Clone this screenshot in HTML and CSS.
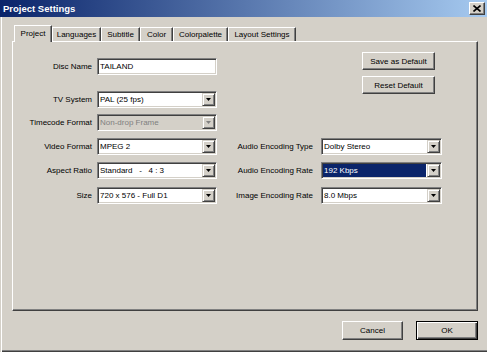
FILE: index.html
```html
<!DOCTYPE html>
<html>
<head>
<meta charset="utf-8">
<link rel="stylesheet" href="styles.css">
</head>
<body>
<div class="window">
  <div class="titlebar">
    <span class="title">Project Settings</span>
    <span class="close"><svg width="8" height="7" viewBox="0 0 8 7"><path d="M0.5 0.5 L7.5 6.5 M7.5 0.5 L0.5 6.5" stroke="#000" stroke-width="1.6" fill="none"/></svg></span>
  </div>
  <div class="tabs">
    <div class="tab tab-sel w-project">Project</div>
    <div class="tab w-lang">Languages</div>
    <div class="tab w-sub">Subtitle</div>
    <div class="tab w-color">Color</div>
    <div class="tab w-pal">Colorpalette</div>
    <div class="tab w-layout">Layout Settings</div>
  </div>
  <div class="panel">
    <div class="top">
      <div class="top-form">
        <div class="row row-disc">
          <span class="lbl">Disc Name</span>
          <div class="field input">TAILAND</div>
        </div>
        <div class="row row-tv">
          <span class="lbl">TV System</span>
          <div class="field select"><span class="val">PAL (25 fps)</span><span class="drop"><svg width="5" height="3" viewBox="0 0 5 3"><path d="M0 0H5L2.5 3Z" fill="#000"/></svg></span></div>
        </div>
        <div class="row row-tc">
          <span class="lbl">Timecode Format</span>
          <div class="field select disabled"><span class="val">Non-drop Frame</span><span class="drop"><svg width="5" height="3" viewBox="0 0 5 3"><path d="M0 0H5L2.5 3Z" fill="#808080"/></svg></span></div>
        </div>
      </div>
      <div class="side-buttons">
        <div class="btn btn-side btn-save">Save as Default</div>
        <div class="btn btn-side">Reset Default</div>
      </div>
    </div>
    <div class="row4 row-video">
      <span class="lbl">Video Format</span>
      <div class="field select"><span class="val">MPEG 2</span><span class="drop"><svg width="5" height="3" viewBox="0 0 5 3"><path d="M0 0H5L2.5 3Z" fill="#000"/></svg></span></div>
      <span class="lbl lbl-r">Audio Encoding Type</span>
      <div class="field select"><span class="val">Dolby Stereo</span><span class="drop"><svg width="5" height="3" viewBox="0 0 5 3"><path d="M0 0H5L2.5 3Z" fill="#000"/></svg></span></div>
    </div>
    <div class="row4 row-aspect">
      <span class="lbl">Aspect Ratio</span>
      <div class="field select"><span class="val pre">Standard   -   4 : 3</span><span class="drop"><svg width="5" height="3" viewBox="0 0 5 3"><path d="M0 0H5L2.5 3Z" fill="#000"/></svg></span></div>
      <span class="lbl lbl-r">Audio Encoding Rate</span>
      <div class="field select"><span class="val sel">192 Kbps</span><span class="drop"><svg width="5" height="3" viewBox="0 0 5 3"><path d="M0 0H5L2.5 3Z" fill="#000"/></svg></span></div>
    </div>
    <div class="row4 row-size">
      <span class="lbl">Size</span>
      <div class="field select"><span class="val">720 x 576 - Full D1</span><span class="drop"><svg width="5" height="3" viewBox="0 0 5 3"><path d="M0 0H5L2.5 3Z" fill="#000"/></svg></span></div>
      <span class="lbl lbl-r">Image Encoding Rate</span>
      <div class="field select"><span class="val">8.0 Mbps</span><span class="drop"><svg width="5" height="3" viewBox="0 0 5 3"><path d="M0 0H5L2.5 3Z" fill="#000"/></svg></span></div>
    </div>
  </div>
  <div class="footer">
    <div class="btn btn-cancel">Cancel</div>
    <div class="btn btn-ok">OK</div>
  </div>
</div>
</body>
</html>
```
FILE: styles.css
```css
html, body {
  margin: 0;
  padding: 0;
}
body {
  width: 487px;
  height: 352px;
  overflow: hidden;
  background: #D4D0C8;
  font-family: "Liberation Sans", Arial, sans-serif;
  font-size: 8px;
  color: #000;
}
.window {
  box-sizing: border-box;
  width: 487px;
  height: 352px;
  background: #D4D0C8;
  box-shadow: inset 1px 0 #D4D0C8, inset 2px 0 #ffffff, inset 0 -1px #404040, inset 0 -2px #808080;
}
.titlebar {
  height: 17px;
  display: flex;
  align-items: center;
  padding-left: 3px;
  background: linear-gradient(to right, #0A246A, #A6CAF0);
}
.title {
  color: #fff;
  font-weight: bold;
  font-size: 9.5px;
}
.close {
  margin-left: auto;
  margin-right: 2px;
  box-sizing: border-box;
  width: 16px;
  height: 13px;
  background: #D4D0C8;
  border: 1px solid;
  border-color: #fff #404040 #404040 #fff;
  box-shadow: inset -1px -1px #808080;
  display: flex;
  align-items: center;
  justify-content: center;
}
.tabs {
  display: flex;
  align-items: flex-end;
  height: 16px;
  margin: 8px 0 0 14px;
}
.tab {
  box-sizing: border-box;
  height: 14px;
  border-top: 1px solid #fff;
  border-left: 1px solid #fff;
  border-right: 1px solid #404040;
  box-shadow: inset -1px 0 #808080;
  display: flex;
  align-items: center;
  justify-content: center;
  background: #D4D0C8;
}
.tab-sel {
  height: 17px;
  margin-bottom: -1px;
  padding-bottom: 2px;
  position: relative;
  z-index: 1;
}
.w-project { width: 38px; }
.w-lang { width: 49px; }
.w-sub { width: 39px; }
.w-color { width: 33px; }
.w-pal { width: 55px; }
.w-layout { width: 68px; }
.panel {
  box-sizing: border-box;
  width: 466px;
  height: 270px;
  margin-left: 12px;
  border-top: 1px solid #fff;
  border-left: 1px solid #fff;
  border-right: 1px solid #404040;
  border-bottom: 1px solid #404040;
  box-shadow: inset -1px -1px #808080;
}
.top {
  display: flex;
  align-items: flex-start;
}
.top-form {
  width: 204px;
}
.row {
  display: grid;
  grid-template-columns: 84px 120px;
  align-items: center;
  height: 17px;
}
.row4 {
  display: grid;
  grid-template-columns: 84px 120px 104px 121px;
  align-items: center;
  height: 17px;
}
.row-disc { margin-top: 16px; }
.row-tv { margin-top: 16px; }
.row-tc { margin-top: 6px; }
.row-video { margin-top: 7px; }
.row-aspect { margin-top: 7px; }
.row-size { margin-top: 8px; }
.lbl {
  text-align: right;
  padding-right: 5px;
  white-space: nowrap;
}
.lbl-r {
  padding-right: 8px;
}
.field {
  box-sizing: border-box;
  height: 17px;
  border: 1px solid;
  border-color: #808080 #fff #fff #808080;
  box-shadow: inset 1px 1px #404040, inset -1px -1px #D4D0C8;
  background: #fff;
  white-space: nowrap;
  overflow: hidden;
}
.input {
  padding-left: 2px;
  line-height: 15px;
}
.select {
  display: flex;
  align-items: center;
}
.val {
  flex: 1;
  height: 13px;
  line-height: 13px;
  margin-left: 1px;
  padding-left: 1px;
}
.pre { white-space: pre; }
.val.sel {
  background: #0A246A;
  color: #fff;
  margin-right: 1px;
}
.drop {
  box-sizing: border-box;
  width: 13px;
  height: 13px;
  margin-right: 1px;
  background: #D4D0C8;
  border: 1px solid;
  border-color: #D4D0C8 #404040 #404040 #D4D0C8;
  box-shadow: inset 1px 1px #fff, inset -1px -1px #808080;
  display: flex;
  align-items: center;
  justify-content: center;
}
.disabled {
  background: #D4D0C8;
  color: #808080;
}
.side-buttons {
  display: flex;
  flex-direction: column;
  gap: 6px;
  margin-left: 145px;
  margin-top: 10px;
}
.btn {
  box-sizing: border-box;
  display: flex;
  align-items: center;
  justify-content: center;
  background: #D4D0C8;
  border: 1px solid;
  border-color: #fff #404040 #404040 #fff;
  box-shadow: inset -1px -1px #808080;
}
.btn-side {
  width: 73px;
  height: 18px;
}
.footer {
  display: flex;
  justify-content: flex-end;
  gap: 13px;
  margin-top: 10px;
  padding-right: 9px;
}
.btn-cancel {
  width: 61px;
  height: 19px;
}
.btn-ok {
  width: 62px;
  height: 19px;
  border-color: #000;
  box-shadow: inset 1px 1px #fff, inset -1px -1px #404040, inset -2px -2px #808080;
}
```
